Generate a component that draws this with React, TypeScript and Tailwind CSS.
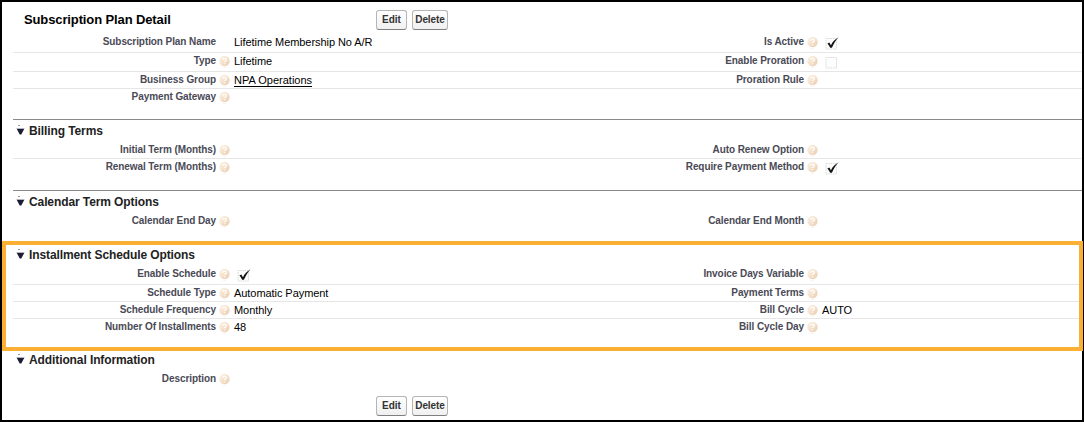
import type { ReactNode } from "react";

type Field = { label: string; help?: boolean; value?: ReactNode };

function HelpIcon() {
  return (
    <svg width="11" height="13" viewBox="0 0 11 13" className="ml-[3px] mt-px shrink-0">
      <defs>
        <linearGradient id="orb" x1="0" y1="0" x2="1" y2="1">
          <stop offset="0" stopColor="#fbf3e8" />
          <stop offset="0.5" stopColor="#f5e2cd" />
          <stop offset="1" stopColor="#e8c9ae" />
        </linearGradient>
      </defs>
      <circle cx="5.5" cy="6" r="5.2" fill="url(#orb)" />
      <path d="M3.7 4.7C3.8 2.7 7.3 2.7 7.3 4.6C7.3 5.8 5.6 5.8 5.6 7.1M5.6 8.2V9.3" fill="none" stroke="#fffdfa" strokeWidth="1.3" />
      <path d="M4 12.5h3" stroke="#f9f3ed" strokeWidth="1" />
    </svg>
  );
}

function Check({ checked = false }: { checked?: boolean }) {
  return (
    <svg width="16" height="15" viewBox="0 0 16 15" className="ml-[3px] block">
      <rect x="1" y="3.5" width="10.5" height="10.5" fill="#fdfdfd" stroke="#dadada" strokeWidth="1" strokeDasharray="1.5 0.8" />
      {checked && <path d="M2.4 8.6L4.4 7.6L5.9 10.2C7.6 6.9 9.8 4.4 13.6 2.3C10.8 5.2 8.9 8.6 6.9 12.8H5.1C4.4 11.2 3.6 9.8 2.4 8.6Z" fill="#151515" />}
    </svg>
  );
}

function Cell({ field }: { field?: Field }) {
  if (!field) return <div className="w-[588px]" />;
  return (
    <div className="flex w-[588px] shrink-0 items-start pt-px">
      <div className="w-[203px] text-right text-[10px] font-bold leading-[14px] tracking-[-0.08px] text-[#4a4a56]">{field.label}</div>
      {field.help === false ? <div className="ml-[3px] w-[11px]" /> : <HelpIcon />}
      <div className="ml-1 text-[11px] leading-[15px] tracking-[-0.06px] text-black">{field.value}</div>
    </div>
  );
}

function Row({ left, right, className }: { left: Field; right?: Field; className: string }) {
  return (
    <div className={`flex overflow-hidden border-[#e6e6e6] ${className}`}>
      <Cell field={left} />
      <Cell field={right} />
    </div>
  );
}

function SectionTitle({ children, className = "h-[22px] pt-[3px]" }: { children: ReactNode; className?: string }) {
  return (
    <div className={`flex items-start ${className}`}>
      <svg width="9" height="12" viewBox="0 0 9 12" className="ml-[3px] mt-px shrink-0">
        <path d="M2 1.5h2" stroke="#999" />
        <path d="M.5 4.5h8" stroke="#b5b5bd" />
        <path d="M.8 5h7.4L5.3 10.5H3.7Z" fill="#1d1d36" />
      </svg>
      <h3 className="ml-1 text-[12px] font-bold leading-4 tracking-[-0.1px] text-[#222]">{children}</h3>
    </div>
  );
}

function Buttons() {
  return (
    <div className="flex gap-[5px]">
      <button className="h-5 w-[31px] rounded-[3px] border border-[#b5b5b5] border-b-[#7f7f7f] bg-linear-to-b from-white to-[#f0f0f0] text-[10px] font-bold leading-[18px] text-[#333]">Edit</button>
      <button className="h-5 w-9 rounded-[3px] border border-[#b5b5b5] border-b-[#7f7f7f] bg-linear-to-b from-white to-[#f0f0f0] text-[10px] font-bold leading-[18px] tracking-[-0.1px] text-[#333]">Delete</button>
    </div>
  );
}

export default function App() {
  return (
    <main className="h-[422px] w-[1084px] border-2 border-black bg-white font-['Liberation_Sans',Arial,sans-serif]">
      <section className="pl-[11px]">
        <header className="flex h-8 items-start">
          <h2 className="ml-[11px] mt-[9px] w-[352px] text-[13px] font-bold leading-[18px] tracking-[-0.12px] text-black">Subscription Plan Detail</h2>
          <div className="mt-2"><Buttons /></div>
        </header>
        <Row className="h-[19px] border-b" left={{ label: "Subscription Plan Name", help: false, value: "Lifetime Membership No A/R" }} right={{ label: "Is Active", value: <Check checked /> }} />
        <Row className="h-[19px] border-b" left={{ label: "Type", value: "Lifetime" }} right={{ label: "Enable Proration", value: <Check /> }} />
        <Row className="h-[17px] border-b" left={{ label: "Business Group", value: <a className="tracking-normal underline underline-offset-2">NPA Operations</a> }} right={{ label: "Proration Rule" }} />
        <Row className="h-[30px]" left={{ label: "Payment Gateway" }} />
      </section>
      <section className="pl-[11px]">
        <div className="border-t border-[#8a8a8a]">
          <SectionTitle>Billing Terms</SectionTitle>
          <Row className="h-[17px] border-b" left={{ label: "Initial Term (Months)" }} right={{ label: "Auto Renew Option" }} />
          <Row className="h-[31px]" left={{ label: "Renewal Term (Months)" }} right={{ label: "Require Payment Method", value: <Check checked /> }} />
        </div>
      </section>
      <section className="pl-[11px]">
        <div className="border-t border-[#8a8a8a]">
          <SectionTitle>Calendar Term Options</SectionTitle>
          <Row className="h-7" left={{ label: "Calendar End Day" }} right={{ label: "Calendar End Month" }} />
        </div>
      </section>
      <section className="-mr-px h-[110px] border-4 border-[#fbb034] pl-[7px]">
        <SectionTitle className="h-[21px] pt-[2px]">Installment Schedule Options</SectionTitle>
        <Row className="h-[19px] border-b" left={{ label: "Enable Schedule", value: <Check checked /> }} right={{ label: "Invoice Days Variable" }} />
        <Row className="h-[17px] border-b" left={{ label: "Schedule Type", value: "Automatic Payment" }} right={{ label: "Payment Terms" }} />
        <Row className="h-[17px] border-b" left={{ label: "Schedule Frequency", value: "Monthly" }} right={{ label: "Bill Cycle", value: "AUTO" }} />
        <Row className="h-7" left={{ label: "Number Of Installments", value: "48" }} right={{ label: "Bill Cycle Day" }} />
      </section>
      <section className="pl-[11px]">
        <SectionTitle className="h-5 pt-px">Additional Information</SectionTitle>
        <Row className="h-[25px]" left={{ label: "Description" }} />
        <div className="pl-[363px]"><Buttons /></div>
      </section>
    </main>
  );
}
